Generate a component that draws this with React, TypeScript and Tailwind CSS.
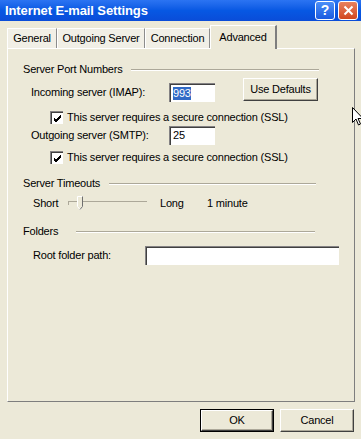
import React from 'react';

const font = { fontFamily: '"Liberation Sans", Arial, sans-serif' };

function GroupHeader({ label, lineStart, lineEnd }: { label: string; lineStart: number; lineEnd: number }) {
  return (
    <div className="flex items-center h-[13px]">
      <span className="pl-[15px] leading-[13px]" style={{ width: lineStart - 7 }}>
        {label}
      </span>
      <div className="flex flex-col" style={{ width: lineEnd - lineStart }}>
        <div className="h-px bg-[#ACA899]" />
        <div className="h-px bg-white" />
      </div>
    </div>
  );
}

function TextBox({ w, h, children }: { w: number; h: number; children?: React.ReactNode }) {
  return (
    <div
      className="bg-white border-t border-l border-[#848284] border-r-white border-b-white shadow-[inset_1px_1px_0_#404040] flex items-center pl-[3px]"
      style={{ width: w, height: h }}
    >
      {children}
    </div>
  );
}

function Button({ label, w, isDefault }: { label: string; w: number; isDefault?: boolean }) {
  return (
    <div
      className={
        isDefault
          ? 'h-[23px] border border-black bg-[#ECE9D8] flex'
          : 'h-[23px] bg-[#ECE9D8] flex'
      }
      style={{ width: w }}
    >
      <div className="flex-1 flex items-center justify-center border-t border-l border-white border-r border-b border-r-[#404040] border-b-[#404040] shadow-[inset_-1px_-1px_0_#ACA899]">
        {label}
      </div>
    </div>
  );
}

function Checkbox() {
  return (
    <div className="w-[13px] h-[13px] bg-white border-t border-l border-[#848284] border-r-white border-b-white shadow-[inset_1px_1px_0_#404040] flex items-center justify-center">
      <svg width="9" height="9" viewBox="0 0 9 9">
        <path d="M1 4 L3 6 L8 1 M1 5 L3 7 L8 2 M1 6 L3 8 L8 3" stroke="#000" strokeWidth="1" fill="none" />
      </svg>
    </div>
  );
}

function Tab({ label, w, active }: { label: string; w: number; active?: boolean }) {
  if (active) {
    return (
      <div
        className="h-[24px] -mb-px z-10 bg-[#ECE9D8] border-t border-l border-white border-r-2 border-r-[#7E7E7E] flex items-start justify-center pt-[3px] relative"
        style={{ width: w }}
      >
        {label}
      </div>
    );
  }
  return (
    <div
      className="h-[20px] mt-[4px] bg-[#F1EFE6] border-t border-l border-white border-r border-r-[#8C8C8C] flex items-center justify-center"
      style={{ width: w }}
    >
      {label}
    </div>
  );
}

export default function App() {
  return (
    <div className="w-[361px] h-[439px] bg-[#ECE9D8] text-[11px] tracking-[-0.2px] text-black relative overflow-hidden flex flex-col" style={font}>
      {/* title bar */}
      <div className="h-[21px] bg-gradient-to-b from-[#2B74F2] via-[#0758E3] to-[#0A4CD8] flex items-center pl-[5px]">
        <span className="text-white font-bold text-[13px] flex-1 tracking-[-0.1px]">Internet E-mail Settings</span>
        <div className="w-[20px] h-[19px] rounded-[3px] border border-white bg-gradient-to-b from-[#4C8EF7] to-[#1B5BE0] text-white font-bold text-[14px] flex items-center justify-center mr-[3px]">
          ?
        </div>
        <div className="w-[20px] h-[19px] rounded-[3px] border border-white bg-gradient-to-b from-[#E8815E] to-[#D1451C] flex items-center justify-center mr-[3px]">
          <svg width="11" height="11" viewBox="0 0 11 11">
            <path d="M1.5 1.5 L9.5 9.5 M9.5 1.5 L1.5 9.5" stroke="#fff" strokeWidth="2" />
          </svg>
        </div>
      </div>

      {/* tabs */}
      <div className="flex items-end pl-[7px] mt-[3px] h-[24px]">
        <Tab label="General" w={50} />
        <Tab label="Outgoing Server" w={88} />
        <Tab label="Connection" w={65} />
        <Tab label="Advanced" w={67} active />
      </div>

      {/* panel */}
      <div className="ml-[7px] w-[348px] h-[354px] border-t border-l border-white border-r border-b border-r-[#7E7E7E] border-b-[#7E7E7E] flex flex-col">
        <div className="mt-[14px]">
          <GroupHeader label="Server Port Numbers" lineStart={130} lineEnd={318} />
        </div>

        <div className="flex items-start mt-[2px] h-[23px]">
          <span className="ml-[23px] w-[138px] mt-[8px] leading-[13px]">Incoming server (IMAP):</span>
          <div className="mt-[5px]">
            <TextBox w={46} h={19}>
              <span className="bg-[#316AC5] text-white leading-[13px]">993</span>
            </TextBox>
          </div>
          <div className="ml-[28px]">
            <Button label="Use Defaults" w={75} />
          </div>
        </div>

        <div className="flex items-center mt-[10px] ml-[42px] h-[13px]">
          <Checkbox />
          <span className="ml-[4px]">This server requires a secure connection (SSL)</span>
        </div>

        <div className="flex items-center mt-[1px] h-[20px]">
          <span className="ml-[23px] w-[138px] leading-[13px]">Outgoing server (SMTP):</span>
          <TextBox w={46} h={19}>
            <span className="leading-[13px]">25</span>
          </TextBox>
        </div>

        <div className="flex items-center mt-[6px] ml-[42px] h-[13px]">
          <Checkbox />
          <span className="ml-[4px]">This server requires a secure connection (SSL)</span>
        </div>

        <div className="mt-[13px]">
          <GroupHeader label="Server Timeouts" lineStart={108} lineEnd={315} />
        </div>

        <div className="flex items-center mt-[6px] h-[14px]">
          <span className="ml-[25px] w-[35px]">Short</span>
          <div className="relative w-[79px] h-[14px] flex items-center">
            <div className="w-full h-[4px] border-t border-l border-[#ACA899] border-r-white border-b-white bg-[#ECE9D8]" />
            <div className="absolute left-[9px] top-0 w-[6px] h-[14px]">
              <svg width="6" height="14" viewBox="0 0 6 14">
                <path d="M0.5 0.5 H5.5 V10.5 L3 13.5 L0.5 10.5 Z" fill="#ECE9D8" stroke="#ffffff" />
                <path d="M5.5 0.5 V10.5 L3 13.5" fill="none" stroke="#6E6E6E" />
              </svg>
            </div>
          </div>
          <span className="ml-[13px] w-[47px]">Long</span>
          <span>1 minute</span>
        </div>

        <div className="mt-[15px]">
          <GroupHeader label="Folders" lineStart={75} lineEnd={314} />
        </div>

        <div className="flex items-center mt-[8px] h-[19px]">
          <span className="ml-[25px] w-[112px] leading-[13px]">Root folder path:</span>
          <TextBox w={194} h={19} />
        </div>
      </div>

      {/* buttons */}
      <div className="flex justify-end gap-[6px] mt-[7px] pr-[7px]">
        <Button label="OK" w={74} isDefault />
        <Button label="Cancel" w={74} />
      </div>

      {/* mouse cursor */}
      <svg className="absolute left-[352px] top-[107px]" width="12" height="20" viewBox="0 0 12 20">
        <path d="M0.5 0.5 L0.5 15.5 L4 12 L6.5 18 L8.5 17 L6 11.5 L11 11.5 Z" fill="#fff" stroke="#000" strokeWidth="1" />
      </svg>
    </div>
  );
}
